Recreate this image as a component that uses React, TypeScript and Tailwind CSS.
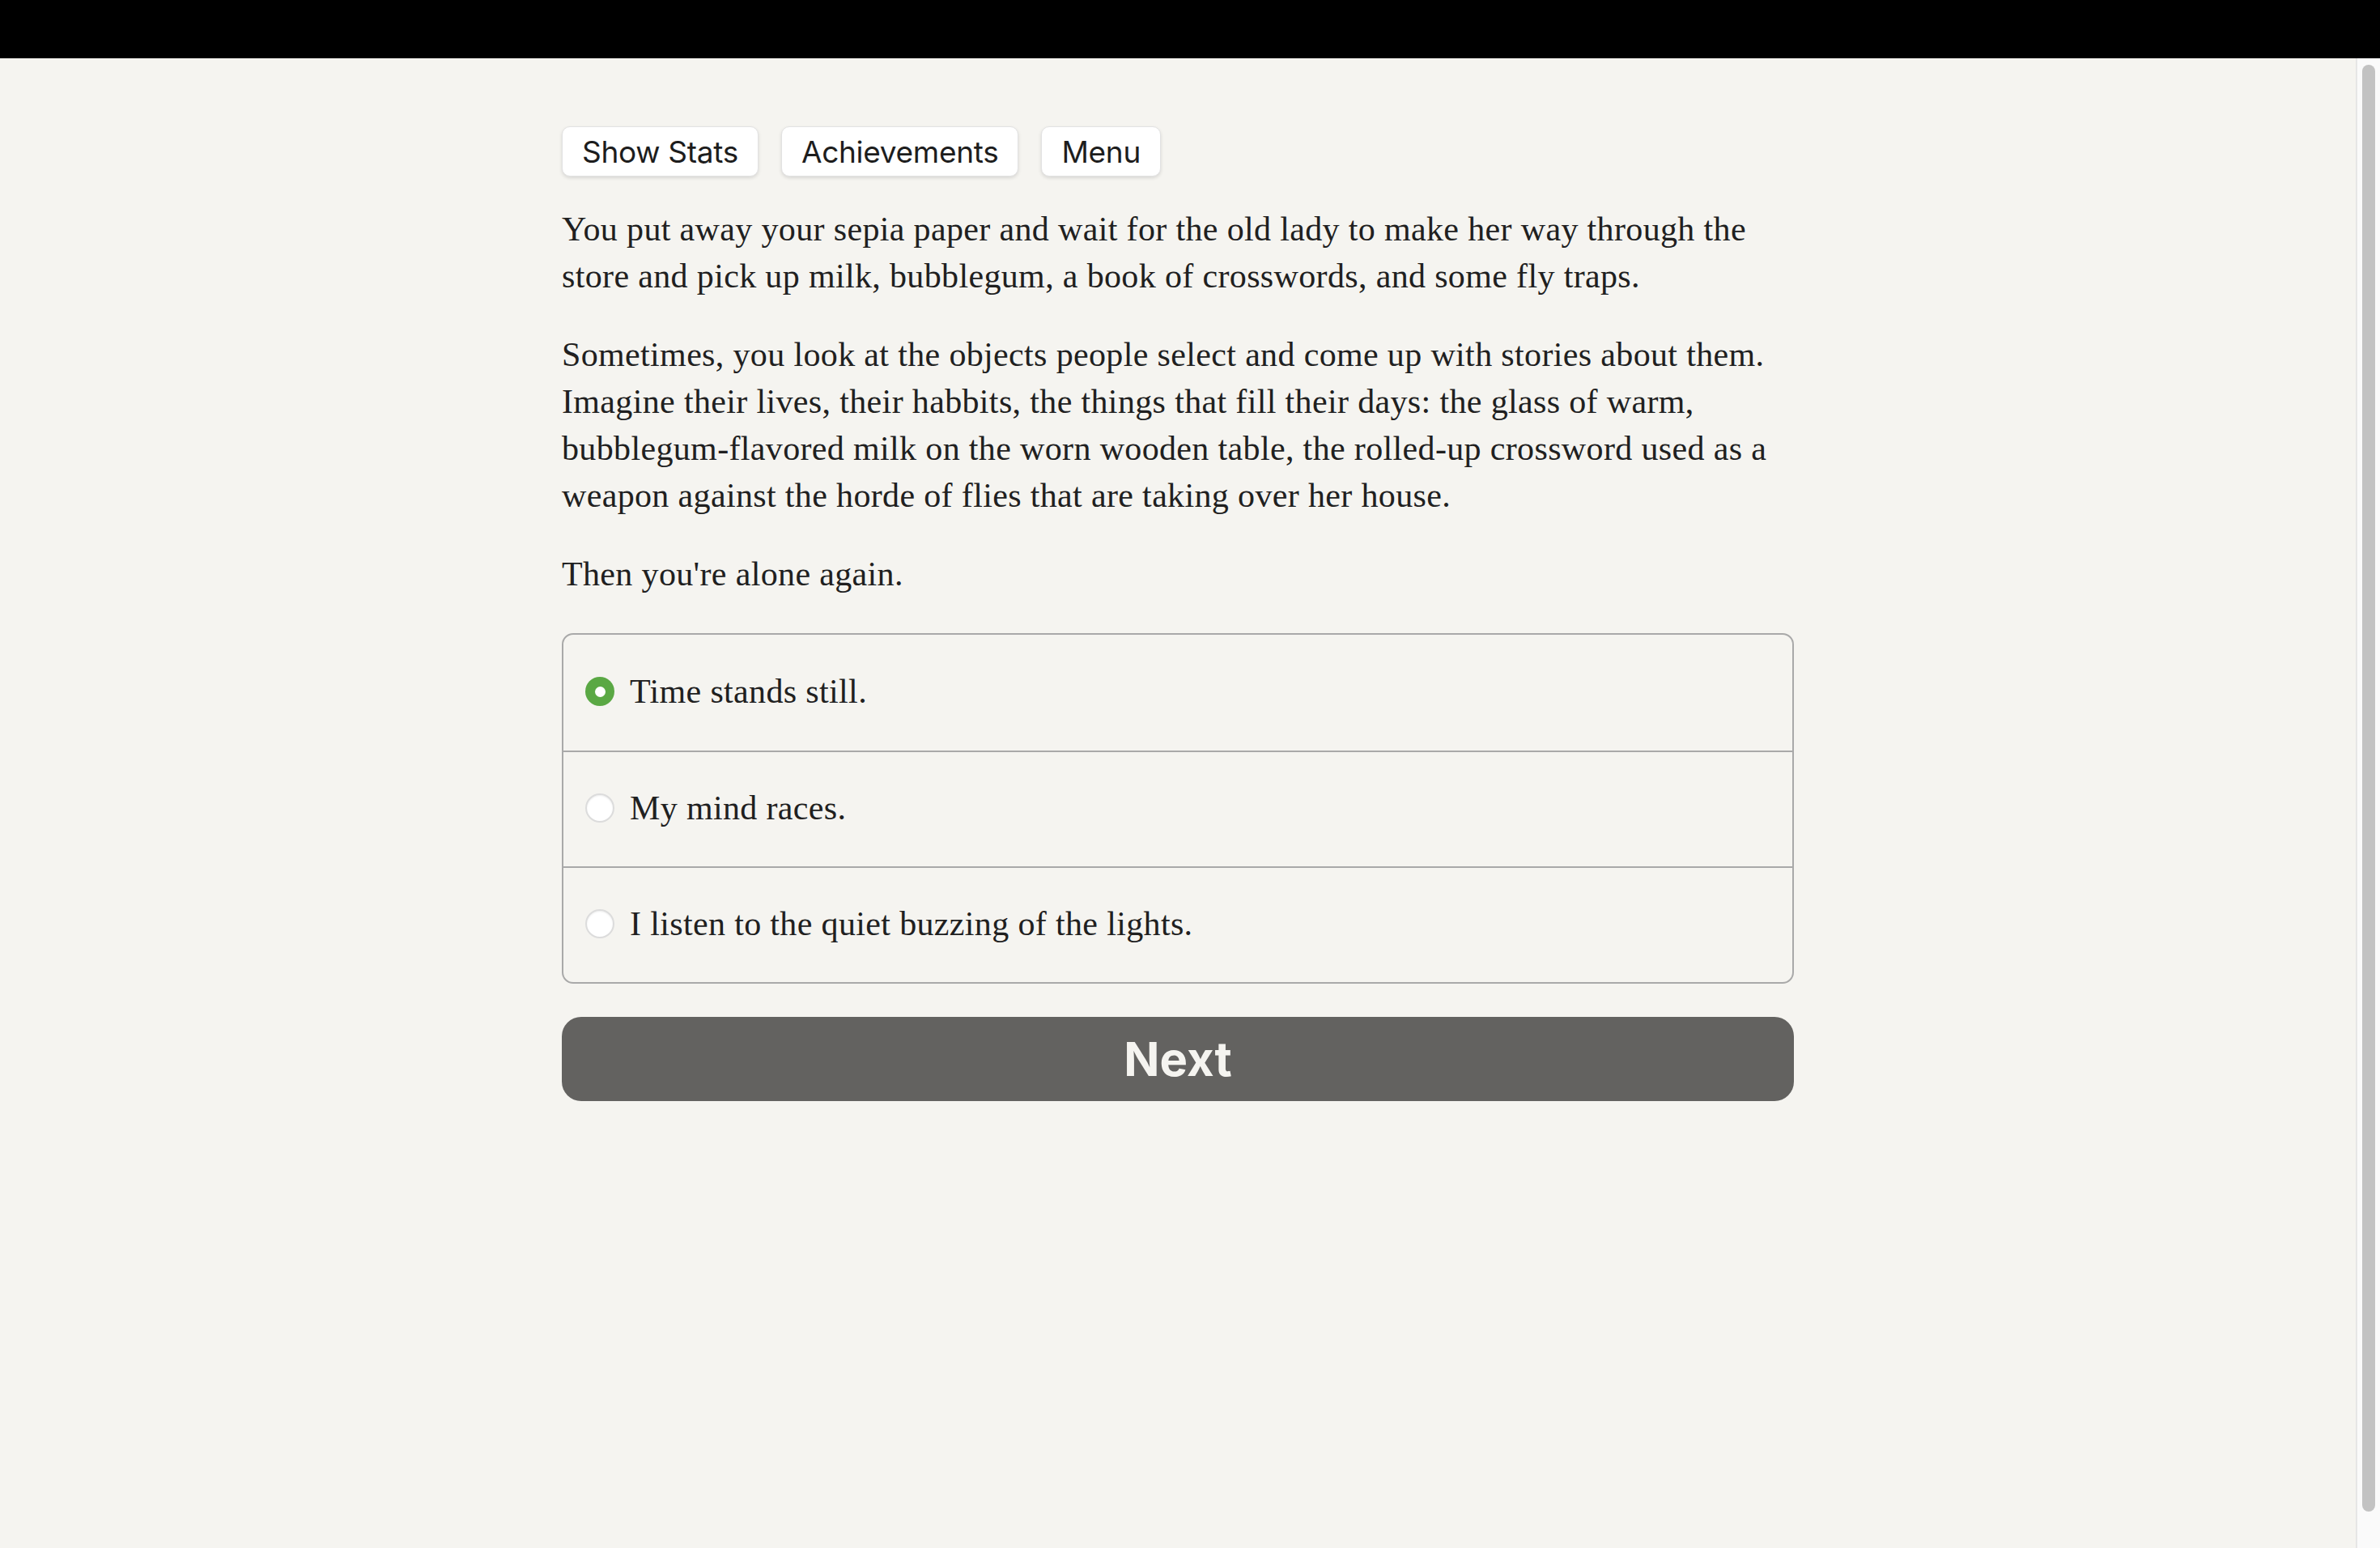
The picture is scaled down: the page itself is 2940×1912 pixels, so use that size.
import { useState } from "react";

const paragraphs = [
  "You put away your sepia paper and wait for the old lady to make her way through the store and pick up milk, bubblegum, a book of crosswords, and some fly traps.",
  "Sometimes, you look at the objects people select and come up with stories about them. Imagine their lives, their habbits, the things that fill their days: the glass of warm, bubblegum-flavored milk on the worn wooden table, the rolled-up crossword used as a weapon against the horde of flies that are taking over her house.",
  "Then you're alone again.",
];

const choices = [
  "Time stands still.",
  "My mind races.",
  "I listen to the quiet buzzing of the lights.",
];

function TopButton({ label }: { label: string }) {
  return (
    <button className="h-[62px] px-[24px] rounded-[10px] bg-white border border-[#e2e2e2] shadow-[0_2px_4px_rgba(0,0,0,0.12)] text-[37px] text-[#1d1d1d] font-['Inter',sans-serif] leading-none tracking-[-0.3px]">
      {label}
    </button>
  );
}

export default function App() {
  const [selected, setSelected] = useState(0);

  return (
    <div className="h-screen flex flex-col bg-[#f5f4f0] overflow-hidden">
      <div className="h-[72px] bg-black shrink-0" />

      <div className="flex flex-1 min-h-0">
        <main className="flex-1 pt-[84px]">
          <div className="w-[1522px] mx-auto font-['Liberation_Serif',serif] text-[#202020] tracking-[0.35px]">
            <div className="flex gap-[28px] tracking-normal">
              <TopButton label="Show Stats" />
              <TopButton label="Achievements" />
              <TopButton label="Menu" />
            </div>

            <div className="mt-[36px] flex flex-col gap-[39px] text-[42px] leading-[58px]">
              {paragraphs.map((p) => (
                <p key={p}>{p}</p>
              ))}
            </div>

            <div className="mt-[44px] border-2 border-[#a9a9a9] rounded-[14px] overflow-hidden">
              {choices.map((c, i) => (
                <label
                  key={c}
                  onClick={() => setSelected(i)}
                  className={`flex items-center h-[143px] pl-[27px] pb-[3px] gap-[19px] cursor-pointer text-[42px] ${
                    i > 0 ? "border-t-2 border-[#a9a9a9]" : ""
                  }`}
                >
                  {selected === i ? (
                    <span className="w-[36px] h-[36px] rounded-full bg-[#5aa844] flex items-center justify-center shrink-0">
                      <span className="w-[13px] h-[13px] rounded-full bg-white" />
                    </span>
                  ) : (
                    <span className="w-[36px] h-[36px] rounded-full bg-white border-2 border-[#dcdcdc] shadow-[inset_0_1px_2px_rgba(0,0,0,0.08)] shrink-0" />
                  )}
                  <span>{c}</span>
                </label>
              ))}
            </div>

            <button className="mt-[41px] w-full h-[104px] rounded-[24px] bg-[#636260] text-[#f5f4f0] text-[58px] font-bold font-['Inter',sans-serif] leading-none tracking-normal">
              Next
            </button>
          </div>
        </main>

        <div className="w-[30px] shrink-0 bg-[#fafafa] border-l-2 border-[#e6e6e6] pt-[8px] pb-[45px] pl-[6px] pr-[6px]">
          <div className="h-full w-[16px] rounded-full bg-[#c2c2c2]" />
        </div>
      </div>
    </div>
  );
}
